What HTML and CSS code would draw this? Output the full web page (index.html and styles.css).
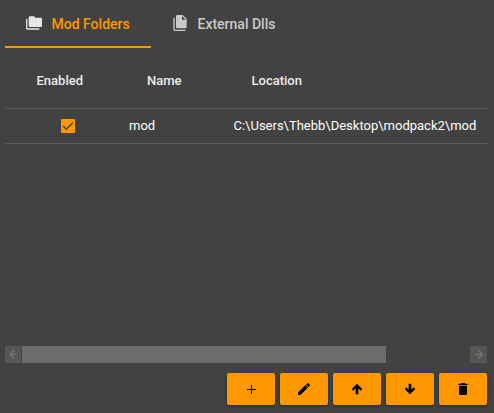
FILE: index.html
```html
<!DOCTYPE html>
<html lang="en">
<head>
<meta charset="utf-8">
<title>Mods</title>
<link rel="stylesheet" href="styles.css">
</head>
<body>
<main class="panel">
  <nav class="tabs">
    <button class="tab tab-active">
      <svg class="icon" viewBox="0 0 24 24"><path d="M22,4H14L12,2H6A2,2 0 0,0 4,4V16A2,2 0 0,0 6,18H22A2,2 0 0,0 24,16V6A2,2 0 0,0 22,4M2,6H0V20A2,2 0 0,0 2,22H20V20H2V6Z"/></svg>
      <span class="label">Mod Folders</span>
    </button>
    <button class="tab">
      <svg class="icon" viewBox="0 0 24 24"><path d="M15,7H20.5L15,1.5V7M8,0H16L22,6V18A2,2 0 0,1 20,20H8C6.89,20 6,19.1 6,18V2A2,2 0 0,1 8,0M4,4V22H20V24H4A2,2 0 0,1 2,22V4H4Z"/></svg>
      <span class="label">External Dlls</span>
    </button>
  </nav>
  <section class="list">
    <div class="row head">
      <span>Enabled</span><span>Name</span><span>Location</span>
    </div>
    <div class="row item">
      <span class="check"><svg viewBox="0 0 14 14"><path d="M2.2 7.1 5.3 10.2 11.8 3.7"/></svg></span>
      <span>mod</span>
      <span>C:\Users\Thebb\Desktop\modpack2\mod</span>
    </div>
  </section>
  <div class="scrollbar">
    <span class="arrow"><svg viewBox="0 0 17 17"><path d="M12 8.5H5.5M9 4.5 5.5 8.5 9 12.5"/></svg></span>
    <span class="thumb"></span>
    <span class="arrow"><svg viewBox="0 0 17 17"><path d="M5 8.5H12M8.5 4.5 12.3 8.5 8.5 12.5"/></svg></span>
  </div>
  <footer class="actions">
    <button class="action" aria-label="Add"><svg viewBox="0 0 16 16"><path d="M8 4h1v4h4v1H9v4H8V9H4V8h4z"/></svg></button>
    <button class="action" aria-label="Edit"><svg viewBox="0 0 24 24"><path d="M20.71,7.04C21.1,6.65 21.1,6 20.71,5.63L18.37,3.29C18,2.9 17.35,2.9 16.96,3.29L15.12,5.12L18.87,8.87M3,17.25V21H6.75L17.81,9.93L14.06,6.18L3,17.25Z"/></svg></button>
    <button class="action" aria-label="Move up"><svg viewBox="0 0 24 24"><path d="M14,20H10V11L6.5,14.5L4.08,12.08L12,4.16L19.92,12.08L17.5,14.5L14,11V20Z"/></svg></button>
    <button class="action" aria-label="Move down"><svg viewBox="0 0 24 24"><path d="M10,4H14V13L17.5,9.5L19.92,11.92L12,19.84L4.08,11.92L6.5,9.5L10,13V4Z"/></svg></button>
    <button class="action" aria-label="Delete"><svg viewBox="0 0 24 24"><path d="M19,4H15.5L14.5,3H9.5L8.5,4H5V6H19M6,19A2,2 0 0,0 8,21H16A2,2 0 0,0 18,19V7H6V19Z"/></svg></button>
  </footer>
</main>
</body>
</html>
```
FILE: styles.css
```css
* {
  box-sizing: border-box;
}

body {
  margin: 0;
  background: #424242;
  color: #fff;
  font: 13px/20px Roboto, sans-serif;
}

button {
  border: 0;
  padding: 0;
  font: inherit;
}

svg {
  display: block;
}

.panel {
  display: flex;
  flex-direction: column;
  width: 494px;
  height: 413px;
  padding: 0 7px 8px 5px;
}

.tabs {
  display: flex;
  height: 48px;
}

.tab {
  display: flex;
  align-items: center;
  gap: 9.5px;
  height: 48px;
  padding: 0 21px;
  border-bottom: 2px solid transparent;
  background: none;
  color: #cacaca;
  font-size: 14px;
  font-weight: 500;
  white-space: nowrap;
}

.tab-active {
  width: 146px;
  border-bottom-color: #ff9800;
  color: #ff9800;
}

.label {
  padding-top: 2px;
}

.icon {
  flex: none;
  width: 16px;
  height: 16px;
  fill: #cacaca;
}

.tab-active .icon {
  fill: #e6e6e6;
}

.list {
  flex: 1;
}

.row {
  display: grid;
  align-items: center;
  border-bottom: 1px solid #5c5c5c;
  white-space: nowrap;
}

.head {
  grid-template-columns: 110.5px 104.5px 1fr;
  height: 61px;
  padding: 5px 0 0 31.5px;
  color: #ececec;
  font-weight: 500;
}

.item {
  grid-template-columns: 68px 104.5px 1fr;
  height: 35px;
  padding-left: 56px;
}

.check {
  width: 14px;
  height: 14px;
  border-radius: 1px;
  background: #ff9800;
}

.check path {
  fill: none;
  stroke: #424242;
  stroke-width: 1.4;
}

.scrollbar {
  display: flex;
  justify-content: space-between;
  height: 17px;
  margin-bottom: 10px;
}

.arrow {
  width: 17px;
  background: #565656;
}

.arrow:first-child {
  border-right: 1px solid #484848;
}

.arrow svg {
  width: 17px;
  height: 17px;
}

.arrow path {
  fill: none;
  stroke: #737373;
  stroke-width: 1.7;
}

.thumb {
  width: 364px;
  margin-right: auto;
  background: #6c6c6c;
}

.actions {
  display: flex;
  justify-content: flex-end;
  gap: 5px;
}

.action {
  display: flex;
  align-items: center;
  justify-content: center;
  width: 48px;
  height: 32px;
  border-radius: 2px;
  background: #ff9800;
  box-shadow: 0 1px 3px rgba(0, 0, 0, .45);
}

.action svg {
  width: 16px;
  height: 16px;
}
```
